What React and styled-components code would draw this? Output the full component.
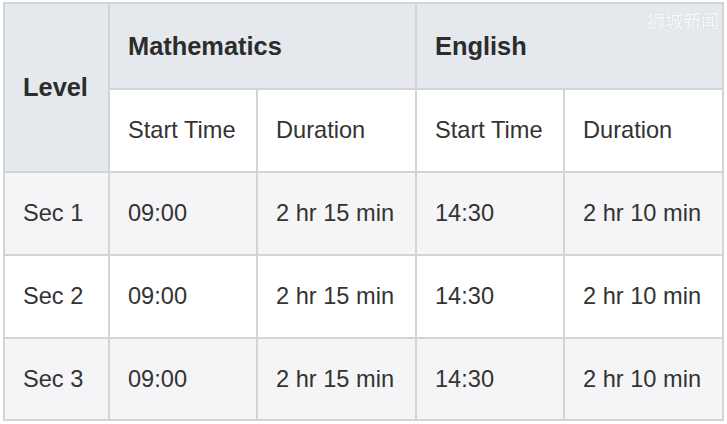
import React from "react";
import styled, { createGlobalStyle } from "styled-components";

const Global = createGlobalStyle`
  html, body { margin: 0; padding: 0; background: #ffffff; }
  body { font-family: "Liberation Sans", Arial, sans-serif; }
`;

const Page = styled.div`
  position: relative;
  width: 727px;
  height: 424px;
  padding: 2px 0 0 3px;
  box-sizing: border-box;
`;

const Table = styled.table`
  border-collapse: collapse;
  table-layout: fixed;
  width: 719px;
  color: #333333;
`;

const HeadCell = styled.th`
  border: 2px solid #d3d4d6;
  background: ${(p) => (p.$light ? "#ffffff" : "#e5e8ec")};
  font-weight: ${(p) => (p.$light ? 400 : 700)};
  font-size: ${(p) => (p.$light ? "23.6px" : "25.4px")};
  color: ${(p) => (p.$light ? "#333333" : "#2c2c2c")};
  text-align: left;
  vertical-align: middle;
  padding: 0 0 0 18px;
  white-space: nowrap;
`;

const Row = styled.tr`
  height: ${(p) => p.$h}px;
  background: ${(p) => (p.$shade ? "#f5f5f7" : "#ffffff")};
`;

const Cell = styled.td`
  border: 2px solid #d3d4d6;
  font-size: 23.6px;
  text-align: left;
  vertical-align: middle;
  padding: 0 0 0 18px;
  white-space: nowrap;
`;

const Watermark = styled.div`
  position: absolute;
  top: 7px;
  right: 8px;
  font-family: "Noto Sans CJK SC", sans-serif;
  font-size: 18px;
  color: rgba(255, 255, 255, 0.92);
  text-shadow: 0 0 1px rgba(170, 175, 185, 0.55);
`;

const rows = [
  { level: "Sec 1", shade: true },
  { level: "Sec 2", shade: false },
  { level: "Sec 3", shade: true },
];

export default function App() {
  return (
    <Page>
      <Global />
      <Table>
        <colgroup>
          <col style={{ width: 105 }} />
          <col style={{ width: 148 }} />
          <col style={{ width: 159 }} />
          <col style={{ width: 148 }} />
          <col style={{ width: 159 }} />
        </colgroup>
        <thead>
          <Row $h={86}>
            <HeadCell rowSpan={2}>Level</HeadCell>
            <HeadCell colSpan={2}>Mathematics</HeadCell>
            <HeadCell colSpan={2}>English</HeadCell>
          </Row>
          <Row $h={83}>
            <HeadCell $light>Start Time</HeadCell>
            <HeadCell $light>Duration</HeadCell>
            <HeadCell $light>Start Time</HeadCell>
            <HeadCell $light>Duration</HeadCell>
          </Row>
        </thead>
        <tbody>
          {rows.map((r, i) => (
            <Row key={r.level} $h={i === 2 ? 82 : 83} $shade={r.shade}>
              <Cell>{r.level}</Cell>
              <Cell>09:00</Cell>
              <Cell>2 hr 15 min</Cell>
              <Cell>14:30</Cell>
              <Cell>2 hr 10 min</Cell>
            </Row>
          ))}
        </tbody>
      </Table>
      <Watermark>狮城新闻</Watermark>
    </Page>
  );
}
